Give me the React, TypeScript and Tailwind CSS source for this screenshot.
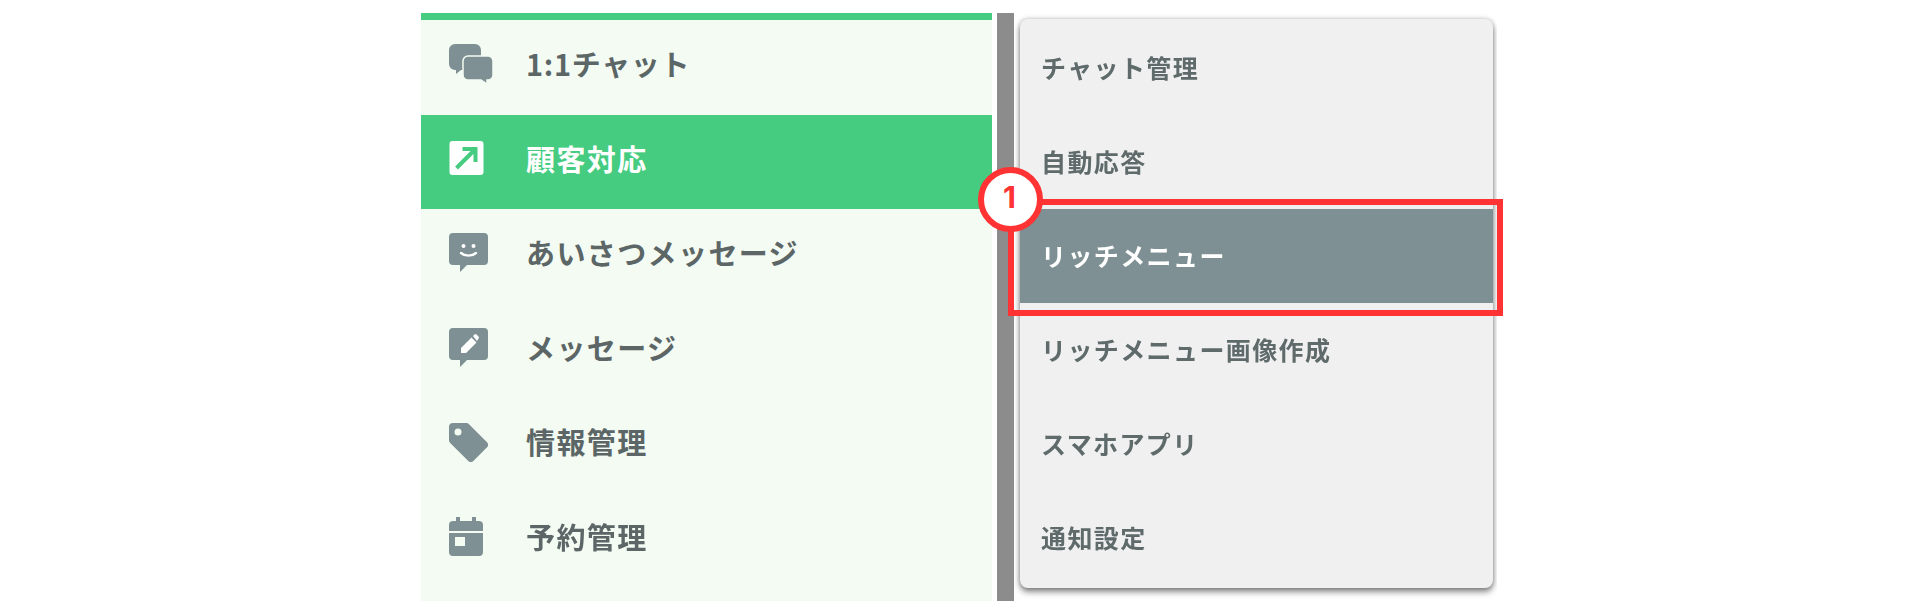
import type { ReactNode } from 'react';

const fontStack = "font-['Noto_Sans_CJK_JP','Noto_Sans',sans-serif]";

function ChatsIcon() {
  return (
    <svg viewBox="0 0 44 40" className="h-[40px] w-[44px]">
      <path d="M6 0h20a6 6 0 0 1 6 6v14a6 6 0 0 1-6 6H12l-5 4v-4H6a6 6 0 0 1-6-6V6a6 6 0 0 1 6-6z" className="fill-[#7e9093]" />
      <path d="M19 12h20a5 5 0 0 1 5 5v14a5 5 0 0 1-5 5h-1v4l-6-4H19a5 5 0 0 1-5-5V17a5 5 0 0 1 5-5z" className="fill-[#7e9093] stroke-[#f3fbf3]" strokeWidth="1.5" />
    </svg>
  );
}

function ArrowBoxIcon() {
  return (
    <svg viewBox="0 0 34 34" className="h-[34px] w-[35px]">
      <rect width="34" height="34" rx="3" className="fill-white" />
      <path d="M7 27 25 9M13 8h13v13" className="fill-none stroke-[#45cc80]" strokeWidth="4" />
    </svg>
  );
}

function SmileBubbleIcon() {
  return (
    <svg viewBox="0 0 39 39" className="h-[39px] w-[39px]">
      <path d="M4 0h31a4 4 0 0 1 4 4v24a4 4 0 0 1-4 4H18l-7 7v-7H4a4 4 0 0 1-4-4V4a4 4 0 0 1 4-4z" className="fill-[#7e9093]" />
      <circle cx="14.500" cy="13" r="2" className="fill-white" />
      <circle cx="24.500" cy="13" r="2" className="fill-white" />
      <path d="M12 20c4 3.500 11 3.500 15 0" className="fill-none stroke-white" strokeWidth="2.400" strokeLinecap="round" />
    </svg>
  );
}

function PenBubbleIcon() {
  return (
    <svg viewBox="0 0 39 39" className="h-[39px] w-[39px]">
      <path d="M4 0h31a4 4 0 0 1 4 4v24a4 4 0 0 1-4 4H18l-7 7v-7H4a4 4 0 0 1-4-4V4a4 4 0 0 1 4-4z" className="fill-[#7e9093]" />
      <path d="M12 25v-5l10.500-10.500 5 5L17 25z M24 8l1.500-1.500a1.400 1.400 0 0 1 2 0l2 2a1.400 1.400 0 0 1 0 2L28 13z" className="fill-white" />
    </svg>
  );
}

function TagIcon() {
  return (
    <svg viewBox="0 0 39 39" className="h-[39px] w-[39px]">
      <path d="M4 0h13a4 4 0 0 1 3 1.200l17.800 17.800a4 4 0 0 1 0 5.600L24.600 37.800a4 4 0 0 1-5.600 0L1.200 20A4 4 0 0 1 0 17V4a4 4 0 0 1 4-4z" className="fill-[#7e9093]" />
      <circle cx="9" cy="9" r="3.500" className="fill-[#f3fbf3]" />
    </svg>
  );
}

function CalendarIcon() {
  return (
    <svg viewBox="0 0 34 39" className="h-[39px] w-[34px]">
      <path d="M7 0h4v4h12V0h4v4h3a4 4 0 0 1 4 4v6H0V8a4 4 0 0 1 4-4h3zM0 16h34v19a4 4 0 0 1-4 4H4a4 4 0 0 1-4-4z" className="fill-[#7e9093]" />
      <rect x="6" y="20" width="10" height="9" className="fill-[#f3fbf3]" />
    </svg>
  );
}

const navItems: { label: string; icon: ReactNode; active?: boolean; tight?: boolean }[] = [
  { label: '1:1チャット', icon: <ChatsIcon />, tight: true },
  { label: '顧客対応', icon: <ArrowBoxIcon />, active: true },
  { label: 'あいさつメッセージ', icon: <SmileBubbleIcon /> },
  { label: 'メッセージ', icon: <PenBubbleIcon /> },
  { label: '情報管理', icon: <TagIcon /> },
  { label: '予約管理', icon: <CalendarIcon /> },
];

const subItems = ['チャット管理', '自動応答', 'リッチメニュー', 'リッチメニュー画像作成', 'スマホアプリ', '通知設定'];

export default function App() {
  return (
    <div className={`h-[615px] w-full bg-white pl-[421px] pt-[13px] ${fontStack}`}>
      <div className="relative h-[588px] w-[1076px]">
        <div className="flex h-full items-start overflow-hidden blur-[0.5px]">
          {/* 左メニュー */}
          <nav className="h-full w-[571px] shrink-0 border-t-[7px] border-[#45cc80] bg-[#f3fbf3]">
            {navItems.map((item) => (
              <div
                key={item.label}
                className={`flex h-[94.6px] items-center pb-[7px] pl-[28px] text-[29px] font-bold ${
                  item.tight ? 'tracking-[0.7px]' : 'tracking-[1.4px]'
                } ${item.active ? 'bg-[#45cc80] text-white' : 'text-[#5c6666]'}`}
              >
                <span className="flex w-[77px] shrink-0 items-center">{item.icon}</span>
                {item.label}
              </div>
            ))}
          </nav>

          {/* スクロールバー */}
          <div className="ml-[5px] h-full w-[17px] shrink-0 bg-[#8c8c8c]" />

          {/* サブメニュー */}
          <div className="ml-[6px] mt-[6px] w-[473px] shrink-0 rounded-[8px] bg-[#f0f0f0] pb-[3px] pt-[2px] shadow-[0_4px_6px_rgba(0,0,0,0.45),0_0_5px_rgba(0,0,0,0.25)]">
            {subItems.map((label, i) => (
              <div
                key={label}
                className={`flex h-[94px] items-center pb-[1px] pl-[21px] text-[25px] font-bold tracking-[1.4px] ${
                  i === 2 ? 'bg-[#7e9093] text-white' : 'text-[#5f6a6a]'
                }`}
              >
                {label}
              </div>
            ))}
          </div>
        </div>

        {/* 赤枠と番号 */}
        <div className="absolute left-[587px] top-[186px] h-[117px] w-[495px] border-[6px] border-[#ff3333]" />
        <div className="absolute left-[557px] top-[154px] flex h-[65px] w-[65px] items-center justify-center rounded-full border-[6px] border-[#ff3333] bg-white pb-1 pr-0.5 font-['Inter',sans-serif] text-[30px] font-bold text-[#ff3333]">
          1
        </div>
      </div>
    </div>
  );
}
